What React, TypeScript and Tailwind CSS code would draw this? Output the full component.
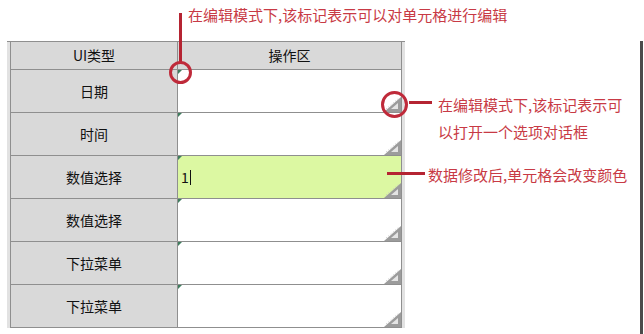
import React from 'react';

const rows = [
  { label: '日期', value: '', changed: false },
  { label: '时间', value: '', changed: false },
  { label: '数值选择', value: '1', changed: true },
  { label: '数值选择', value: '', changed: false },
  { label: '下拉菜单', value: '', changed: false },
  { label: '下拉菜单', value: '', changed: false },
];

function CornerMark() {
  return (
    <svg width="5" height="5" viewBox="0 0 5 5" className="absolute left-0 top-0">
      <polygon points="0,0 4,0 0,4" fill="#3f7d5e" />
    </svg>
  );
}

function DialogMark() {
  // set-square style marker at the bottom-right of an editable cell
  return (
    <svg width="17" height="15" viewBox="0 0 17 15" className="absolute bottom-0 right-0">
      <polygon points="0,15 17,0 17,15" fill="#9c9c9c" />
      <polygon points="7,12 14,6 14,12" fill="#e4e4e4" />
      <line x1="2" y1="12" x2="15" y2="1" stroke="#c8c8c8" strokeWidth="1" strokeDasharray="1 2" />
    </svg>
  );
}

export default function App() {
  return (
    <div className="relative h-[334px] w-[644px] overflow-hidden bg-white font-['Noto_Sans_CJK_SC','Noto_Sans',sans-serif]">
      <div className="h-[332px] w-[643px] border-b-[3px] border-r-[3px] border-[#4b4b4b] bg-white">
        <div className="ml-[7px] mt-[41px] w-[398px] border-t border-[#8f8f8f] bg-[#e2e2e2] pl-[3px] pr-[3px]">
          <div className="border-l border-r border-[#8f8f8f]">
            {/* header */}
            <div className="flex h-[28px] border-b border-[#8f8f8f] bg-[#d9d9d9] text-[14px] text-[#111]">
              <div className="flex w-[167px] items-center justify-center border-r border-[#8f8f8f]">UI类型</div>
              <div className="flex flex-1 items-center justify-center">操作区</div>
            </div>
            {rows.map((r, i) => (
              <div key={i} className="flex h-[43px] border-b border-[#8f8f8f] text-[14px] text-[#111]">
                <div className="flex w-[167px] items-center justify-center border-r border-[#8f8f8f] bg-[#d9d9d9]">
                  {r.label}
                </div>
                <div className={`relative flex flex-1 items-center pl-[3px] ${r.changed ? 'bg-[#dcf8a2]' : 'bg-white'}`}>
                  <CornerMark />
                  {r.value && (
                    <span className="flex items-center">
                      {r.value}
                      <span className="ml-[1px] inline-block h-[15px] w-[1px] bg-[#111]"></span>
                    </span>
                  )}
                  <DialogMark />
                </div>
              </div>
            ))}
          </div>
        </div>
      </div>

      {/* annotation: corner mark */}
      <div className="absolute left-[179px] top-[13px] h-[50px] w-[3px] bg-[#b52432]"></div>
      <div className="absolute left-[169px] top-[61px] h-[23px] w-[23px] rounded-full border-[3px] border-[#bf2a3a]"></div>
      <div className="absolute left-[188px] top-[7px] text-[15px] leading-[16px] text-[#c83a45]">
        在编辑模式下,该标记表示可以对单元格进行编辑
      </div>

      {/* annotation: dialog mark */}
      <div className="absolute left-[381px] top-[91px] h-[27px] w-[27px] rounded-full border-[3px] border-[#bf2a3a]"></div>
      <div className="absolute left-[409px] top-[101px] h-[3px] w-[23px] bg-[#b52432]"></div>
      <div className="absolute left-[438px] top-[91px] text-[15px] leading-[27px] text-[#c83a45]">
        在编辑模式下,该标记表示可
        <br />
        以打开一个选项对话框
      </div>

      {/* annotation: changed cell */}
      <div className="absolute left-[387px] top-[172px] h-[3px] w-[38px] bg-[#b52432]"></div>
      <div className="absolute left-[428px] top-[167px] text-[15px] leading-[16px] text-[#c83a45]">
        数据修改后,单元格会改变颜色
      </div>
    </div>
  );
}
